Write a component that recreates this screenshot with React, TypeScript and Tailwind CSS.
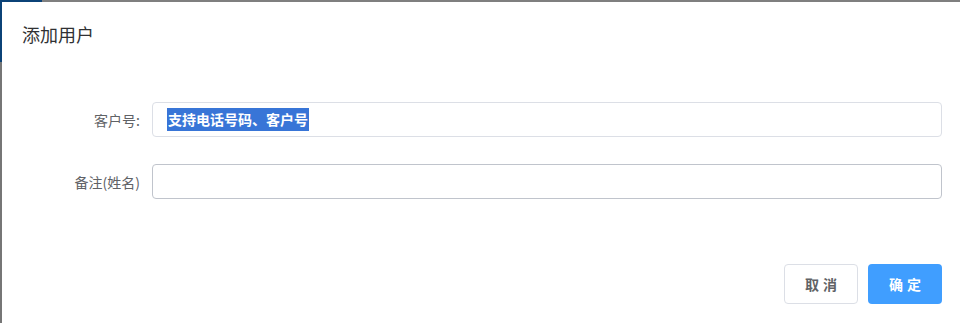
import React from 'react'

const font = { fontFamily: '"Noto Sans CJK SC", "Liberation Sans", sans-serif' }

export default function App() {
  return (
    <div className="w-[960px] h-[323px] flex flex-col bg-white overflow-hidden" style={font}>
      <div className="flex h-[2px] shrink-0">
        <div className="w-[42px] bg-[#0b4277]" />
        <div className="flex-1 bg-[#7f7f7f]" />
      </div>
      <div className="flex flex-1">
        <div className="w-[2px] flex flex-col">
          <div className="h-[60px] bg-[#0b4277]" />
          <div className="flex-1 bg-[#767676]" />
        </div>
        <div className="flex-1 flex flex-col">
          <div className="pl-5 pt-[20px] h-[64px] text-[18px] leading-6 text-[#303133]">添加用户</div>
          <div className="flex flex-col gap-[27px] pt-[36px] pr-[18px]">
            <div className="flex items-center">
              <label className="w-[150px] pr-3 text-right text-sm text-[#606266]">客户号:</label>
              <div className="flex-1 h-[35px] flex items-center border border-[#dcdfe6] rounded pl-[14px]">
                <span className="bg-[#3875d7] text-white font-bold text-sm leading-[23px] px-[1px]">支持电话号码、客户号</span>
              </div>
            </div>
            <div className="flex items-center">
              <label className="w-[150px] pr-3 text-right text-sm text-[#606266]">备注(姓名)</label>
              <div className="flex-1 h-[35px] border border-[#c0c4cc] rounded" />
            </div>
          </div>
          <div className="flex justify-end gap-[10px] pr-[18px] mt-[65px]">
            <button className="w-[74px] h-[40px] border border-[#dcdfe6] rounded text-sm font-semibold tracking-[4px] pl-[4px] text-[#606266] bg-white">取消</button>
            <button className="w-[74px] h-[40px] rounded text-sm font-semibold tracking-[4px] pl-[4px] text-white bg-[#409eff]">确定</button>
          </div>
        </div>
      </div>
    </div>
  )
}
